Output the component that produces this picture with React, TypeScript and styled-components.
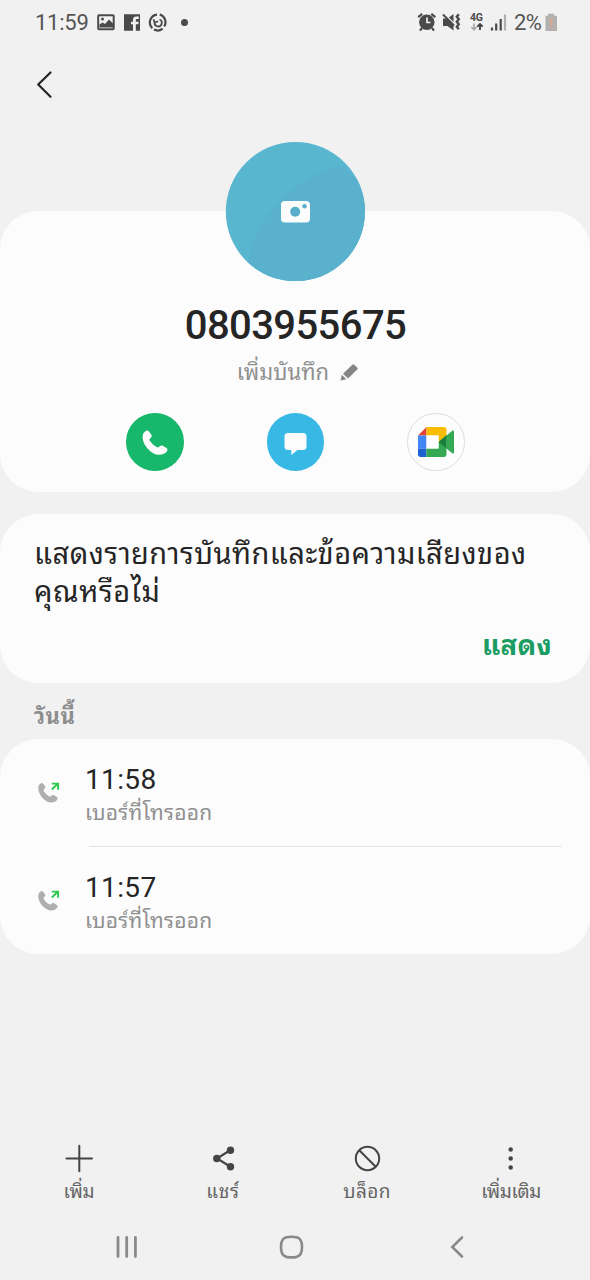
import React from "react";
import styled, { createGlobalStyle } from "styled-components";

const Global = createGlobalStyle`
  * { box-sizing: border-box; }
  body { margin: 0; background: #f1f1f1; font-family: Roboto, "Noto Sans Thai Looped", "Noto Looped Thai", Loma, Waree, Garuda, "Droid Sans Thai", "Noto Sans", sans-serif; color: #252525; }
  svg { display: block; flex: none; }
`;

const Screen = styled.div`
  width: 590px;
  height: 1280px;
  display: flex;
  flex-direction: column;
  overflow: hidden;
  background: #f1f1f1;
`;

const StatusBar = styled.header`
  height: 44px;
  padding: 1px 33px 0 35px;
  display: flex;
  justify-content: space-between;
  align-items: center;
  color: #555;
  font-size: 22px;
`;

const StatusGroup = styled.div`
  display: flex;
  align-items: center;
`;

const StatusText = styled.span<{ $width: number; $spacing?: number }>`
  width: ${(p) => p.$width}px;
  letter-spacing: ${(p) => p.$spacing ?? 0}px;
  white-space: nowrap;
`;

const TopBar = styled.nav`
  height: 167px;
  flex: none;
  padding: 26px 0 0 35px;
`;

const Card = styled.section<{ $height: number }>`
  height: ${(p) => p.$height}px;
  flex: none;
  border-radius: 38px;
  background: #fcfcfc;
`;

const ProfileCard = styled(Card)`
  display: flex;
  flex-direction: column;
  align-items: center;
`;

const Avatar = styled.div`
  margin-top: -70px;
  height: 140px;
`;

const PhoneNumber = styled.h1`
  margin: 22px 0 0;
  height: 46px;
  padding-left: 1px;
  font-size: 40px;
  line-height: 46px;
  font-weight: 500;
  letter-spacing: -0.6px;
`;

const NoteRow = styled.div`
  height: 32px;
  margin-top: 8px;
  padding-left: 6px;
  display: flex;
  align-items: center;
  gap: 10px;
`;

const Label = styled.span<{ $size: number; $color: string; $weight?: number; $line?: number; $spacing?: number }>`
  display: block;
  font-size: ${(p) => p.$size}px;
  color: ${(p) => p.$color};
  font-weight: ${(p) => p.$weight ?? 400};
  line-height: ${(p) => p.$line ?? 30}px;
  letter-spacing: ${(p) => p.$spacing ?? 0}px;
  white-space: nowrap;
`;

const Actions = styled.div`
  margin-top: 24px;
  padding-left: 1px;
  display: flex;
  gap: 83px;
`;

const Action = styled.div<{ $bg: string; $border?: string }>`
  width: 57.5px;
  height: 57.5px;
  border-radius: 50%;
  background: ${(p) => p.$bg};
  border: ${(p) => (p.$border ? `1px solid ${p.$border}` : "0")};
  display: flex;
  align-items: center;
  justify-content: center;
`;

const PromptCard = styled(Card)`
  margin-top: 22px;
  padding: 21px 38px 0 34px;
  display: flex;
  flex-direction: column;
`;

const PromptAction = styled.div`
  margin-top: 16px;
  align-self: flex-end;
`;

const SectionTitle = styled.div`
  height: 56px;
  flex: none;
  padding: 19px 0 0 34px;
`;

const CallRow = styled.div`
  height: 108px;
  padding: 24px 0 0 35px;
  display: flex;
  gap: 24px;
`;

const CallIcon = styled.div`
  width: 26px;
  padding-top: 17px;
`;

const CallTime = styled.div`
  font-size: 28px;
  line-height: 34px;
  letter-spacing: 0.35px;
`;

const Divider = styled.hr`
  border: 0;
  height: 1px;
  margin: -1px 28px 0 89px;
  background: #e3e3e3;
`;

const Toolbar = styled.footer`
  margin-top: auto;
  height: 74px;
  padding: 0 7px;
  display: flex;
`;

const Tool = styled.div`
  flex: 1;
  display: flex;
  flex-direction: column;
  align-items: center;
  gap: 3px;
`;

const NavBar = styled.div`
  height: 66px;
  padding: 20px 122px 0 115px;
  display: flex;
`;

const NavItem = styled.div<{ $width: number }>`
  width: ${(p) => p.$width}px;
`;

const PHONE =
  "M.3 7C.3 3.800 1.800 1.600 4 .7c1-.4 2-.1 2.600.7l2.300 3c.8 1.100.7 2.200-.2 3.100L7.400 8.900c-.4.5-.4 1-.1 1.600 2 3 4.500 5.300 7.600 6.800.6.300 1.100.2 1.600-.2l1.300-1.100c.9-.7 2-.7 3-.1l3.300 2.100c1 .7 1.300 1.900.7 3-1.500 2.600-4.300 3.800-8 3.800C9.500 24.800.3 15.500.3 7z";

const CallEntry = ({ time }: { time: string }) => (
  <CallRow>
    <CallIcon>
      <svg width="26" height="24" viewBox="0 0 26 24">
        <path d={PHONE} fill="#aeb0b0" transform="translate(3 2.600) scale(.78 .8)" />
        <path d="M16.800 9.500l6-5.700M16.800 3.600h6.300v6.200" fill="none" stroke="#2fc94f" strokeWidth="1.900" />
      </svg>
    </CallIcon>
    <div>
      <CallTime>{time}</CallTime>
      <Label $size={21} $color="#909090" $line={32} $spacing={0.25}>เบอร์ที่โทรออก</Label>
    </div>
  </CallRow>
);

export default function App() {
  return (
    <Screen>
      <Global />
      <StatusBar>
        <StatusGroup>
          <StatusText $width={62} $spacing={-0.25}>11:59</StatusText>
          <svg width="94" height="20" viewBox="0 0 94 20">
            <rect x="1.200" y="2.200" width="15.500" height="14" rx=".8" fill="none" stroke="#4a4a4a" strokeWidth="2" />
            <path d="M2.500 14.500v-3l3-2 2.500 1.500 4-4.500 4 4v4z" fill="#4a4a4a" />
            <circle cx="5.500" cy="6" r="1.500" fill="#4a4a4a" />
            <path d="M27 1.200h16v16.500h-4.200v-6.400h2.500l.4-2.500h-2.900V7.100c0-.8.4-1.200 1.200-1.200h1.800V3.500h-2.600c-2.200 0-3.200 1.400-3.200 3.300v2h-2v2.500h2v6.400h-9z" fill="#4a4a4a" />
            <g fill="none" stroke="#4a4a4a" strokeWidth="2.200">
              <path d="M60 1.600a8 8 0 0 0-4.700 13.700M57 16.600a8 8 0 0 0 8.600-1M67.200 13.500a8 8 0 0 0-4.500-12" />
              <path d="M57.700 8.800a3.600 3.600 0 1 0 4.800-2.300M56.500 6.300l1.200 3.500 3.400-1.500" strokeWidth="1.800" />
            </g>
            <circle cx="87.500" cy="9.500" r="3.500" fill="#4a4a4a" />
          </svg>
        </StatusGroup>
        <StatusGroup>
          <svg width="97" height="22" viewBox="0 0 97 22">
            <g fill="none" stroke="#4a4a4a" strokeWidth="2.200">
              <path d="M1.200 5.200l4-3.300M18.300 5.200l-4-3.300M5 16l-2 2.700M15 16l2 2.700" />
            </g>
            <circle cx="9.800" cy="10.200" r="7.700" fill="#4a4a4a" />
            <path d="M10 5.500v5h3.500" fill="none" stroke="#f1f1f1" strokeWidth="1.700" />
            <path d="M26 6.500h4.500L36.500 2v16.500l-6-4.500H26z" fill="#4a4a4a" />
            <path d="M27 1.500l10 10" stroke="#f1f1f1" strokeWidth="1.600" />
            <path d="M26 2.500l11 11" stroke="#4a4a4a" strokeWidth="2" />
            <path d="M41.800 2.200l-2 2.500 2 2.500-2 2.500 2 2.500-2 2.500 2 2.500" fill="none" stroke="#4a4a4a" strokeWidth="2.400" />
            <text x="53" y="8.800" fontSize="10.500" fontWeight="700" fill="#4a4a4a" textLength="13">4G</text>
            <path d="M57 11.500v6M54.300 15l2.700 2.700 2.700-2.700" fill="none" stroke="#aaa" strokeWidth="1.700" />
            <path d="M63 18v-6M60.300 14.700l2.700-2.700 2.700 2.700" fill="none" stroke="#444" strokeWidth="1.900" />
            <path d="M75 15.500v3M79.200 11.500v7M83.700 7v11.500" stroke="#4a4a4a" strokeWidth="2.200" />
            <path d="M88 2.500v16" stroke="#b0b0b0" strokeWidth="2.200" />
          </svg>
          <StatusText $width={31} $spacing={-0.5}>2%</StatusText>
          <svg width="12" height="20" viewBox="0 0 12 20">
            <path d="M3 .8h6v2h3V18H.5V2.800H3z" fill="#b3b1b0" />
            <path d="M4.500 5.500h3.500l-.7 7H5.200zM5 14h2.500v1.500H5z" fill="#d7a794" />
          </svg>
        </StatusGroup>
      </StatusBar>

      <TopBar>
        <svg width="20" height="30" viewBox="0 0 20 30">
          <path d="M15.500 2.500L3.200 14.500 15.500 26.800" fill="none" stroke="#252525" strokeWidth="2.200" strokeLinecap="round" strokeLinejoin="round" />
        </svg>
      </TopBar>

      <ProfileCard $height={281}>
        <Avatar>
          <svg width="140" height="140" viewBox="0 0 140 140">
            <defs>
              <clipPath id="disc"><circle cx="70.400" cy="70.600" r="69.600" /></clipPath>
            </defs>
            <g clipPath="url(#disc)">
              <rect width="141" height="141" fill="#58b6cf" />
              <path d="M22 122C32 75 68 36 116 25L140 45v95H22z" fill="#59b1cd" />
            </g>
            <rect x="56" y="60" width="29" height="21.500" rx="4" fill="#fcfcfc" />
            <circle cx="70.200" cy="70.700" r="5" fill="#58afcb" />
            <circle cx="79.500" cy="65.300" r="2.200" fill="#58afcb" />
          </svg>
        </Avatar>
        <PhoneNumber>0803955675</PhoneNumber>
        <NoteRow>
          <Label $size={22} $color="#909090">เพิ่มบันทึก</Label>
          <svg width="20" height="20" viewBox="0 0 20 20">
            <path d="M1.500 17.500l1.300-5.700 4.500 4.400zM4 10.700L13.300 1.700c.7-.7 1.300-.7 2 0l2.900 2.900c.7.700.7 1.300 0 2L9 15.500z" fill="#858585" />
          </svg>
        </NoteRow>
        <Actions>
          <Action $bg="#17b86c">
            <svg width="28" height="28" viewBox="0 0 28 28">
              <path d={PHONE} transform="translate(1.300 2)" fill="#fcfcfc" />
            </svg>
          </Action>
          <Action $bg="#38b9e5">
            <svg width="26" height="26" viewBox="0 0 26 26">
              <path d="M5 4h15c2.300 0 3.500 1.200 3.500 3.500v10c0 2.300-1.200 3.500-3.500 3.500h-5.500L8.300 26V21H5c-2.300 0-3.500-1.200-3.500-3.500v-10C1.500 5.200 2.700 4 5 4z" fill="#fcfcfc" />
            </svg>
          </Action>
          <Action $bg="#fdfdfd" $border="#dedde0">
            <svg width="36" height="30" viewBox="0 0 36 30">
              <path d="M8.500 0v8.500H0z" fill="#e34234" />
              <path d="M0 8.500h8.500v13H0z" fill="#4285f4" />
              <path d="M0 21.500h8.500V30H2.500C1 30 0 29 0 27.500z" fill="#1c62d1" />
              <path d="M8.500 0H26c1.500 0 2.500 1 2.500 2.500V11L20.500 15V8.500h-12z" fill="#fbbc04" />
              <path d="M8.500 21.500h12V15l8-7v19.500c0 1.500-1 2.500-2.500 2.500H8.500z" fill="#34a853" />
              <path d="M28.500 8.500l5.500-4.600c.8-.7 2-.2 2 .9v20.400c0 1.100-1.200 1.600-2 .9l-5.500-4.600z" fill="#34a853" />
              <path d="M20.500 15l8-6.600v13.200z" fill="#188038" />
              <path d="M8.500 8.500h12v13h-12z" fill="#fff" />
            </svg>
          </Action>
        </Actions>
      </ProfileCard>

      <PromptCard $height={169}>
        <Label $size={29} $color="#252525" $line={38} $spacing={0.48}>แสดงรายการบันทึกและข้อความเสียงของ</Label>
        <Label $size={29} $color="#252525" $line={38} $spacing={0.6}>คุณหรือไม่</Label>
        <PromptAction>
          <Label $size={27.5} $color="#1b9c62" $weight={700} $line={38} $spacing={0.3}>แสดง</Label>
        </PromptAction>
      </PromptCard>

      <SectionTitle>
        <Label $size={22} $color="#8c8c8c" $weight={700} $spacing={0.5}>วันนี้</Label>
      </SectionTitle>

      <Card $height={215}>
        <CallEntry time="11:58" />
        <Divider />
        <CallEntry time="11:57" />
      </Card>

      <Toolbar>
        <Tool>
          <svg width="30" height="34" viewBox="0 0 30 34">
            <path d="M2.500 18.500h25.500M15.300 5.700v25.500" stroke="#444" strokeWidth="2" strokeLinecap="round" />
          </svg>
          <Label $size={19} $color="#666" $spacing={-0.2}>เพิ่ม</Label>
        </Tool>
        <Tool>
          <svg width="30" height="34" viewBox="0 0 30 34">
            <path d="M22.500 10L9 18.500l13.500 8.300" fill="none" stroke="#444" strokeWidth="2.200" />
            <g fill="#444"><circle cx="22.500" cy="10.200" r="3.700" /><circle cx="8.800" cy="18.500" r="3.700" /><circle cx="22.500" cy="26.700" r="3.700" /></g>
          </svg>
          <Label $size={19} $color="#666" $spacing={0.7}>แชร์</Label>
        </Tool>
        <Tool>
          <svg width="30" height="34" viewBox="0 0 30 34">
            <circle cx="15.500" cy="18.500" r="11.700" fill="none" stroke="#444" strokeWidth="2" />
            <path d="M7.300 10.300l16.400 16.400" stroke="#444" strokeWidth="2" />
          </svg>
          <Label $size={19} $color="#666" $spacing={0.4}>บล็อก</Label>
        </Tool>
        <Tool>
          <svg width="30" height="34" viewBox="0 0 30 34">
            <g fill="#444"><circle cx="14.700" cy="9.500" r="2.200" /><circle cx="14.700" cy="18.500" r="2.200" /><circle cx="14.700" cy="27.500" r="2.200" /></g>
          </svg>
          <Label $size={19} $color="#666" $spacing={-0.4}>เพิ่มเติม</Label>
        </Tool>
      </Toolbar>

      <NavBar>
        <NavItem $width={163}>
          <svg width="24" height="26" viewBox="0 0 24 26">
            <path d="M3 3.500v19M11.700 3.500v19M20.400 3.500v19" stroke="#8a8a8a" strokeWidth="2.800" strokeLinecap="round" />
          </svg>
        </NavItem>
        <NavItem $width={169}>
          <svg width="28" height="28" viewBox="0 0 28 28">
            <path d="M13.500 2.800C21 2.800 24 5 24 13s-3 10.400-10.500 10.400S3 21 3 13 6 2.800 13.500 2.800z" fill="none" stroke="#8a8a8a" strokeWidth="2.600" />
          </svg>
        </NavItem>
        <NavItem $width={20}>
          <svg width="20" height="26" viewBox="0 0 20 26">
            <path d="M15 3.500L5.300 13 15 22.500" fill="none" stroke="#8a8a8a" strokeWidth="2.600" strokeLinecap="round" />
          </svg>
        </NavItem>
      </NavBar>
    </Screen>
  );
}
